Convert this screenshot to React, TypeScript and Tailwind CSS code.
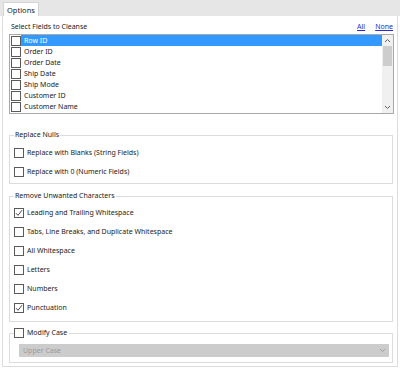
import React from "react";

const font = { fontFamily: '"Noto Sans", "Open Sans", sans-serif' };

function Box({ checked = false }: { checked?: boolean }) {
  return (
    <span className="w-[10px] h-[10px] border border-[#5a5a5a] bg-white flex items-center justify-center shrink-0">
      {checked && (
        <svg width="8" height="8" viewBox="0 0 8 8">
          <polyline points="1,4.2 3,6.3 7,1.2" fill="none" stroke="#333" strokeWidth="0.9" />
        </svg>
      )}
    </span>
  );
}

function Row({ label, checked = false }: { label: string; checked?: boolean }) {
  return (
    <div className="h-[19px] flex items-center gap-[3px]">
      <Box checked={checked} />
      <span>{label}</span>
    </div>
  );
}

const fields = ["Row ID", "Order ID", "Order Date", "Ship Date", "Ship Mode", "Customer ID", "Customer Name"];

export default function App() {
  return (
    <div className="w-[400px] h-[372px] bg-white text-[7px] leading-[10px] text-[#1a1a1a]" style={font}>
      <div className="h-[16px] bg-[#e6e6e6] flex items-end pl-[3px]">
        <div className="h-[14px] px-[3px] bg-white border border-b-0 border-[#d4d4d4] flex items-center text-[7.5px]">Options</div>
      </div>
      <div className="mx-[2px] h-[351px] border-x border-b border-[#dcdcdc] pl-[6px] pr-[3px]">
        <div className="h-[18px] flex items-end justify-between pb-[2px] pl-[2px]">
          <span>Select Fields to Cleanse</span>
          <span className="flex gap-[10px] pr-[1px]">
            <span className="text-[#2a2ad0] underline">All</span>
            <span className="text-[#2a2ad0] underline">None</span>
          </span>
        </div>
        <div className="h-[80px] border border-[#a9a9a9] flex">
          <div className="flex-1 flex flex-col pl-[1px]">
            {fields.map((f, i) => (
              <div key={f} className="h-[11px] flex items-center">
                <Box />
                <span className={"flex-1 h-[11px] flex items-center pl-[3px] " + (i === 0 ? "bg-[#3399ff] text-white" : "")}>{f}</span>
              </div>
            ))}
          </div>
          <div className="w-[11px] bg-[#f0f0f0] flex flex-col items-center">
            <div className="h-[11px] flex items-center justify-center">
              <svg width="7" height="5" viewBox="0 0 7 5"><polyline points="1,4 3.5,1.5 6,4" fill="none" stroke="#606060" strokeWidth="1" /></svg>
            </div>
            <div className="w-[9px] h-[20px] bg-[#cdcdcd]" />
            <div className="flex-1" />
            <div className="h-[11px] flex items-center justify-center">
              <svg width="7" height="5" viewBox="0 0 7 5"><polyline points="1,1 3.5,3.5 6,1" fill="none" stroke="#606060" strokeWidth="1" /></svg>
            </div>
          </div>
        </div>

        <fieldset className="mt-[16px] border border-[#dcdcdc] pt-[3px] pb-[2px] px-[4px] mr-[1px]">
          <legend className="px-[1px]">Replace Nulls</legend>
          <Row label="Replace with Blanks (String Fields)" />
          <Row label="Replace with 0 (Numeric Fields)" />
        </fieldset>

        <fieldset className="mt-[7px] border border-[#dcdcdc] pt-[2px] pb-[4px] px-[4px] mr-[1px]">
          <legend className="px-[1px]">Remove Unwanted Characters</legend>
          <Row label="Leading and Trailing Whitespace" checked />
          <Row label="Tabs, Line Breaks, and Duplicate Whitespace" />
          <Row label="All Whitespace" />
          <Row label="Letters" />
          <Row label="Numbers" />
          <Row label="Punctuation" checked />
        </fieldset>

        <fieldset className="mt-[6px] border border-[#dcdcdc] pt-[6px] pb-[5px] pl-[4px] pr-[3px] mr-[1px]">
          <legend className="pr-[2px] flex items-center gap-[3px]">
            <Box />
            <span>Modify Case</span>
          </legend>
          <div className="ml-[5px] h-[13px] bg-[#cccccc] flex items-center justify-between pl-[4px] pr-[3px] text-[#9a9a9a]">
            <span>Upper Case</span>
            <svg width="7" height="5" viewBox="0 0 7 5"><polyline points="1,1 3.5,3.5 6,1" fill="none" stroke="#a0a0a0" strokeWidth="1" /></svg>
          </div>
        </fieldset>
      </div>
    </div>
  );
}
